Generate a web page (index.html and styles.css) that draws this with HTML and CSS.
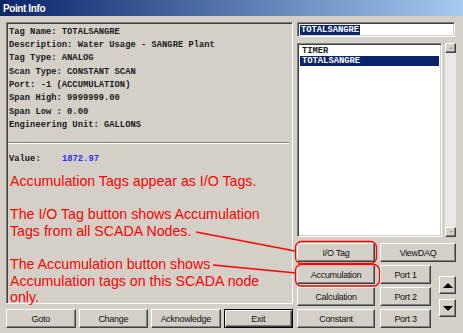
FILE: index.html
```html
<!DOCTYPE html>
<html>
<head>
<meta charset="utf-8">
<title>Point Info</title>
<link rel="stylesheet" href="styles.css">
</head>
<body>
<div class="window">
  <div class="titlebar"><span class="title">Point Info</span></div>
  <div class="body">
    <div class="left">
      <div class="panel">
        <div class="info">
          <div class="line">Tag Name: TOTALSANGRE</div>
          <div class="line">Description: Water Usage - SANGRE Plant</div>
          <div class="line">Tag Type: ANALOG</div>
          <div class="line">Scan Type: CONSTANT SCAN</div>
          <div class="line">Port: -1 (ACCUMULATION)</div>
          <div class="line">Span High: 9999999.00</div>
          <div class="line">Span Low : 0.00</div>
          <div class="line">Engineering Unit: GALLONS</div>
        </div>
        <div class="rule"></div>
        <div class="value"><span class="vlabel">Value:</span><span class="vnum">1872.97</span></div>
        <div class="notes">
          <p>Accumulation Tags appear as I/O Tags.</p>
          <p>The I/O Tag button shows Accumulation<br>Tags from all SCADA Nodes.</p>
          <p class="last">The Accumulation button shows<br>Accumulation tags on this SCADA node<br>only.</p>
        </div>
      </div>
      <div class="bottom-buttons">
        <div class="btn">Goto</div>
        <div class="btn">Change</div>
        <div class="btn">Acknowledge</div>
        <div class="btn default">Exit</div>
      </div>
    </div>
    <div class="right">
      <div class="field"><span class="sel">TOTALSANGRE</span></div>
      <div class="listwrap">
        <div class="list">
          <div class="row">TIMER</div>
          <div class="row selected">TOTALSANGRE</div>
        </div>
        <div class="scrollbar">
          <div class="sbtn"><span class="tri-up small"></span></div>
          <div class="track"></div>
          <div class="sbtn"><span class="tri-down small"></span></div>
        </div>
      </div>
      <div class="btn-grid">
        <div class="btn">I/O Tag</div>
        <div class="btn viewdaq">ViewDAQ</div>
        <div class="btn">Accumulation</div>
        <div class="btn">Port 1</div>
        <div class="arrows">
          <div class="btn arrow"><span class="tri-up"></span></div>
          <div class="btn arrow"><span class="tri-down"></span></div>
        </div>
        <div class="btn">Calculation</div>
        <div class="btn">Port 2</div>
        <div class="btn">Constant</div>
        <div class="btn">Port 3</div>
      </div>
    </div>
  </div>
  <svg class="annot" width="463" height="333" viewBox="0 0 463 333">
    <line x1="196" y1="232" x2="295" y2="251" />
    <line x1="213" y1="265" x2="296" y2="273" />
    <rect x="295.5" y="241.5" width="81" height="22" rx="6" />
    <rect x="295.5" y="264.5" width="84" height="21.5" rx="6" />
  </svg>
</div>
</body>
</html>
```

FILE: styles.css
```css
* { box-sizing: border-box; }
html, body { margin: 0; padding: 0; }
body {
  width: 463px;
  height: 333px;
  overflow: hidden;
  background: #d4d0c8;
  font-family: "Liberation Sans", Arial, sans-serif;
}
.window {
  position: relative;
  width: 463px;
  height: 333px;
  background: #d4d0c8;
}
.titlebar {
  height: 16px;
  background: linear-gradient(to right, #0a246a, #a6caf0);
  display: flex;
  align-items: center;
  padding-left: 3px;
}
.title {
  color: #fff;
  font-weight: bold;
  font-size: 10px;
  letter-spacing: -0.4px;
}
.body {
  display: flex;
  gap: 4px;
  padding: 6px 0 0 6px;
}
.left {
  width: 287px;
  display: flex;
  flex-direction: column;
  gap: 5px;
}
.panel {
  height: 282px;
  border: 1px solid;
  border-color: #808080 #fff #fff #808080;
  box-shadow: inset 1px 1px 0 #404040, inset -1px -1px 0 #d4d0c8;
  padding: 0 2px 0 2px;
}
.info, .value, .field, .row {
  font-family: "Liberation Mono", "Courier New", monospace;
  font-size: 8.8px;
  font-weight: bold;
  color: #1a1a1a;
}
.info {
  padding-top: 2.5px;
  line-height: 13.4px;
}
.line {
  height: 13.4px;
  white-space: pre;
}
.rule {
  margin: 9px 1px 0 -1px;
  height: 2px;
  border-top: 1px solid #808080;
  border-bottom: 1px solid #fff;
}
.value {
  margin-top: 9.6px;
  line-height: 13.4px;
  display: flex;
}
.vlabel { width: 53px; }
.vnum { color: #2a2aff; }
.notes {
  margin-top: 6.4px;
  padding-left: 1px;
  color: #ff0000;
  font-size: 14.2px;
  line-height: 16.6px;
}
.notes p { margin: 0 0 16.6px 0; }
.notes p.last { margin-bottom: 0; }
.bottom-buttons {
  display: flex;
  gap: 3px;
  height: 19px;
}
.bottom-buttons .btn { flex: 1; }
.btn {
  background: #d4d0c8;
  border: 1px solid;
  border-color: #fff #404040 #404040 #fff;
  box-shadow: inset -1px -1px 0 #808080;
  font-size: 9px;
  letter-spacing: -0.3px;
  color: #111;
  display: flex;
  align-items: center;
  justify-content: center;
}
.btn.default {
  border: 1px solid #000;
  box-shadow: inset 1px 1px 0 #fff, inset -1px -1px 0 #404040, inset -2px -2px 0 #808080;
}
.right {
  width: 159px;
  display: flex;
  flex-direction: column;
}
.field {
  height: 15px;
  width: 158px;
  background: #fff;
  border: 1px solid;
  border-color: #808080 #fff #fff #808080;
  box-shadow: inset 1px 1px 0 #404040, inset -1px -1px 0 #d4d0c8;
  padding: 0 0 0 2px;
  line-height: 13px;
  display: flex;
  align-items: center;
}
.sel {
  background: #0a246a;
  color: #fff;
  line-height: 10px;
  padding: 0 1px;
}
.listwrap {
  margin-top: 6px;
  height: 194px;
  display: flex;
  gap: 3px;
}
.list {
  flex: 1;
  background: #fff;
  border: 1px solid;
  border-color: #808080 #fff #fff #808080;
  box-shadow: inset 1px 1px 0 #404040, inset -1px -1px 0 #d4d0c8;
  padding: 2px 2px 0 2px;
}
.row {
  height: 10px;
  line-height: 10px;
  padding-left: 2px;
}
.row.selected {
  background: #0a246a;
  color: #fff;
}
.scrollbar {
  width: 11px;
  display: flex;
  flex-direction: column;
}
.sbtn {
  height: 10px;
  background: #d4d0c8;
  border: 1px solid;
  border-color: #fff #404040 #404040 #fff;
  box-shadow: inset -1px -1px 0 #808080;
  display: flex;
  align-items: center;
  justify-content: center;
}
.track {
  flex: 1;
  background: #ebe9e5;
}
.btn-grid {
  margin-top: 6px;
  display: grid;
  grid-template-columns: 78px 51px 20px;
  grid-template-rows: repeat(4, 19px);
  column-gap: 5px;
  row-gap: 3px;
}
.viewdaq { grid-column: 2 / 4; }
.arrows {
  grid-column: 3;
  grid-row: 2 / 5;
  display: flex;
  flex-direction: column;
  justify-content: center;
  align-items: flex-end;
  gap: 5px;
}
.btn.arrow {
  width: 17px;
  height: 18px;
}
.tri-up, .tri-down {
  width: 0;
  height: 0;
  border-left: 5px solid transparent;
  border-right: 5px solid transparent;
}
.tri-up { border-bottom: 5px solid #000; }
.tri-down { border-top: 5px solid #000; }
.tri-up.small, .tri-down.small {
  border-left-width: 2px;
  border-right-width: 2px;
}
.tri-up.small { border-bottom: 2px solid #a0a0a0; }
.tri-down.small { border-top: 2px solid #a0a0a0; }
.annot {
  position: absolute;
  left: 0;
  top: 0;
  pointer-events: none;
}
.annot line, .annot rect {
  fill: none;
  stroke: #ff0000;
  stroke-width: 1.3;
}
```
